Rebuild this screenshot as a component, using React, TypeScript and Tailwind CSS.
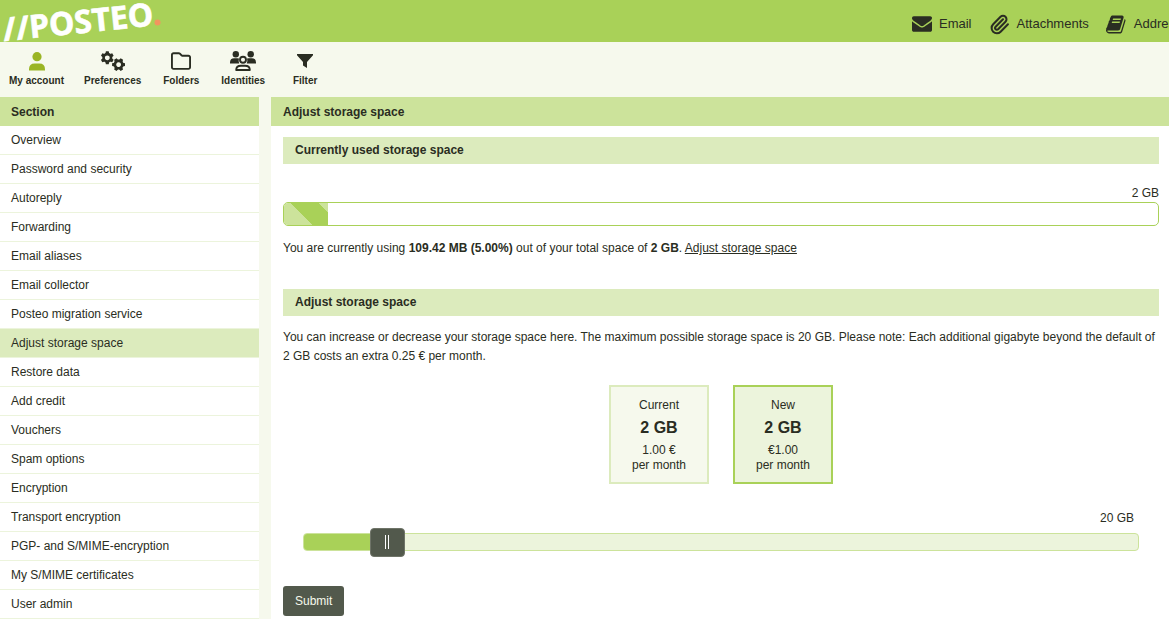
import { useState } from "react";
import type { ReactNode } from "react";
import { Paperclip } from "lucide-react";
import { FaRegFolder } from "react-icons/fa6";

const sections = [
  "Overview",
  "Password and security",
  "Autoreply",
  "Forwarding",
  "Email aliases",
  "Email collector",
  "Posteo migration service",
  "Adjust storage space",
  "Restore data",
  "Add credit",
  "Vouchers",
  "Spam options",
  "Encryption",
  "Transport encryption",
  "PGP- and S/MIME-encryption",
  "My S/MIME certificates",
  "User admin",
];

function Logo() {
  return (
    <svg width="170" height="42" viewBox="0 0 170 42" role="img" aria-label="Posteo">
      <text
        x="4"
        y="41"
        transform="rotate(-5.9 4 41)"
        fill="#fff"
        stroke="#fff"
        strokeWidth="0.6"
        fontWeight="700"
        fontSize="32"
        fontFamily='"Noto Sans", "Open Sans", sans-serif'
      >
        //POSTEO
      </text>
      <circle cx="157.5" cy="22.5" r="3" fill="#f2955f" />
    </svg>
  );
}

function EnvelopeIcon() {
  return (
    <svg width="20" height="20" viewBox="0 64 1792 1792" fill="currentColor" aria-hidden="true">
      <path d="M1792 710v794q0 66-47 113t-113 47h-1472q-66 0-113-47t-47-113v-794q44 49 101 87 362 246 497 345 57 42 92.5 65.5t94.5 48 110 24.5h2q51 0 110-24.5t94.5-48 92.5-65.5q170-123 498-345 57-39 100-87zm0-294q0 79-49 151t-122 123q-376 261-468 325-10 7-42.5 31t-54 38.5-52 32.5-57.5 27-50 9h-2q-23 0-50-9t-57.5-27-52-32.5-54-38.5-42.5-31q-91-64-262-182.5t-205-142.5q-62-42-117-115.5t-55-136.5q0-78 41.5-130t118.5-52h1472q65 0 112.5 47t47.5 113z" />
    </svg>
  );
}

function BookIcon() {
  return (
    <svg width="21" height="21" viewBox="0 0 1792 1792" fill="currentColor" aria-hidden="true">
      <path d="M1639 478q40 57 18 129l-275 906q-19 64-76.5 107.5t-122.5 43.5h-923q-77 0-148.5-53.5t-99.5-131.5q-24-67-2-127 0-4 3-27t4-37q1-8-3-21.5t-3-19.5q2-11 8-21t16.5-23.5 16.5-23.5q23-38 45-91.5t30-91.5q3-10 .5-30t-.5-28q3-11 17-28t17-23q21-36 42-92t25-90q1-9-2.5-32t.5-28q4-13 22-30.5t22-22.5q19-26 42.5-84.5t27.5-96.5q1-8-3-25.5t-2-26.5q2-8 9-18t18-23 17-21q8-12 16.5-30.5t15-35 16-36 19.5-32 26.5-23.5 36-11.5 47.5 5.5l-1 3q38-9 51-9h761q74 0 114 56t18 130l-274 906q-36 119-71.5 153.5t-128.5 34.5h-869q-27 0-38 15-11 16-1 43 24 70 144 70h923q29 0 56-15.5t35-41.5l300-987q7-22 5-57 38 15 59 43zm-1064 2q-4 13 2 22.5t20 9.5h608q13 0 25.5-9.5t16.5-22.5l21-64q4-13-2-22.5t-20-9.5h-608q-13 0-25.5 9.5t-16.5 22.5zm-83 256q-4 13 2 22.5t20 9.5h608q13 0 25.5-9.5t16.5-22.5l21-64q4-13-2-22.5t-20-9.5h-608q-13 0-25.5 9.5t-16.5 22.5z" />
    </svg>
  );
}

function UserIcon() {
  return (
    <svg width="16" height="19" viewBox="0 0 16 19" fill="currentColor" aria-hidden="true">
      <circle cx="8" cy="4.7" r="4.6" />
      <path d="M0 18.4V17.2Q0 11.4 5.8 11.4H10.2Q16 11.4 16 17.2V18.4Z" />
    </svg>
  );
}

function Gear({ x, y, turn }: { x: number; y: number; turn: number }) {
  return (
    <g transform={`translate(${x} ${y}) rotate(${turn})`}>
      <circle r="3.7" fill="none" stroke="currentColor" strokeWidth="2.6" />
      {[0, 60, 120, 180, 240, 300].map((angle) => (
        <path key={angle} d="M-1.9 -4.2L-1.4 -6.5H1.4L1.9 -4.2Z" fill="currentColor" transform={`rotate(${angle})`} />
      ))}
    </g>
  );
}

function GearsIcon() {
  return (
    <svg width="24" height="20" viewBox="0 0 24 20" aria-hidden="true">
      <Gear x={6.3} y={6.8} turn={0} />
      <Gear x={17.6} y={13.6} turn={30} />
    </svg>
  );
}

function IdentitiesIcon() {
  return (
    <svg width="26" height="20" viewBox="0 0 26 20" fill="currentColor" aria-hidden="true">
      <circle cx="5.8" cy="3.2" r="3.2" />
      <circle cx="20.7" cy="3.2" r="3.2" />
      <path d="M0 12.4V11.5Q0 7.2 4.2 7.2H7.4Q8.5 7.2 9 7.6Q8.2 10 9.2 12.4Z" />
      <path d="M26 12.4V11.5Q26 7.2 21.8 7.2H18.6Q17.5 7.2 17 7.6Q17.8 10 16.8 12.4Z" />
      <circle cx="13" cy="8.8" r="3" fill="none" stroke="currentColor" strokeWidth="1.9" />
      <path
        d="M6.2 19Q6.2 14.8 11 14.8H15Q19.8 14.8 19.8 19Z"
        fill="none"
        stroke="currentColor"
        strokeWidth="1.9"
        strokeLinejoin="round"
      />
    </svg>
  );
}

function FilterIcon() {
  return (
    <svg width="16" height="14" viewBox="0 0 16 14" fill="currentColor" aria-hidden="true">
      <path d="M0 0H16V1.2L10 8V14L6 11.4V8L0 1.2Z" />
    </svg>
  );
}

function HeaderLink({ icon, label }: { icon: ReactNode; label: string }) {
  return (
    <a href="#" className="flex shrink-0 items-center gap-[7px] text-[13px]">
      {icon}
      {label}
    </a>
  );
}

function ToolLink({ icon, label, active }: { icon: ReactNode; label: string; active?: boolean }) {
  return (
    <a href="#" className="flex min-w-15 flex-col items-center px-[10px] text-[10px] font-bold">
      <span className={active ? "flex h-6 items-center text-[#9ab524]" : "flex h-6 items-center"}>{icon}</span>
      <span className="leading-[15px]">{label}</span>
    </a>
  );
}

function SubHeading({ children }: { children: ReactNode }) {
  return <h2 className="bg-[#dcebbd] px-3 text-xs leading-[27px] font-bold">{children}</h2>;
}

export default function App() {
  const [size, setSize] = useState(2);
  const price = (1 + Math.max(0, size - 2) * 0.25).toFixed(2);

  return (
    <div className="flex min-h-screen flex-col overflow-x-hidden bg-[#f6f9ed] font-['Liberation_Sans',Arial,sans-serif] text-xs text-[#2a2d22]">
      <header className="flex h-[42px] justify-between bg-[#a9d158]">
        <a href="#" className="shrink-0">
          <Logo />
        </a>
        <nav className="flex w-[257px] shrink-0 gap-[17px] overflow-hidden pt-[6px] whitespace-nowrap">
          <HeaderLink icon={<EnvelopeIcon />} label="Email" />
          <HeaderLink icon={<Paperclip size={21} strokeWidth={2.3} />} label="Attachments" />
          <HeaderLink icon={<BookIcon />} label="Address book" />
        </nav>
      </header>

      <nav className="-ml-px flex h-[55px] pt-[7px]">
        <ToolLink icon={<UserIcon />} label="My account" active />
        <ToolLink icon={<GearsIcon />} label="Preferences" />
        <ToolLink icon={<FaRegFolder size={20} />} label="Folders" />
        <ToolLink icon={<IdentitiesIcon />} label="Identities" />
        <ToolLink icon={<FilterIcon />} label="Filter" />
      </nav>

      <div className="flex grow gap-3">
        <aside className="w-[259px] shrink-0 bg-white">
          <h2 className="bg-[#cce39b] px-[11px] pt-px leading-7 font-bold">Section</h2>
          <ul>
            {sections.map((name) => (
              <li key={name} className="border-b border-[#ecf4dc]">
                <a
                  href="#"
                  className={
                    name === "Adjust storage space"
                      ? "block bg-[#dcebbd] px-[11px] leading-7"
                      : "block px-[11px] leading-7"
                  }
                >
                  {name}
                </a>
              </li>
            ))}
          </ul>
        </aside>

        <main className="min-w-0 grow bg-white">
          <h1 className="bg-[#cce39b] px-3 pt-px leading-7 font-bold">Adjust storage space</h1>
          <div className="pt-[11px] pr-[10px] pl-3">
            <SubHeading>Currently used storage space</SubHeading>
            <div className="mt-5 text-right leading-[18px]">2 GB</div>
            <div className="h-6 overflow-hidden rounded-[5px] border border-[#a9d158]">
              <div className="h-full w-[5%] bg-[repeating-linear-gradient(45deg,#cce39b_0px,#cce39b_20px,#a9d158_20px,#a9d158_40px)]" />
            </div>
            <p className="mt-[13px] leading-[19px]">
              You are currently using <b>109.42 MB (5.00%)</b> out of your total space of <b>2 GB</b>.{" "}
              <a href="#adjust" className="underline">
                Adjust storage space
              </a>
            </p>

            <form id="adjust" className="mt-[31px]" onSubmit={(e) => e.preventDefault()}>
              <SubHeading>Adjust storage space</SubHeading>
              <p className="mt-3 leading-[19px]">
                You can increase or decrease your storage space here. The maximum possible storage space is 20 GB.
                Please note: Each additional gigabyte beyond the default of 2 GB costs an extra 0.25 € per month.
              </p>

              <div className="mt-[19px] flex justify-center gap-6 text-center leading-[15px]">
                <div className="h-[99px] w-[100px] border-2 border-[#dcebbd] bg-[#f6f9ed] pt-[11px]">
                  <div>Current</div>
                  <div className="my-1 text-base leading-[22px] font-bold">2 GB</div>
                  <div>1.00 €</div>
                  <div>per month</div>
                </div>
                <div className="h-[99px] w-[100px] border-2 border-[#a9d158] bg-[#ecf4dc] pt-[11px]">
                  <div>New</div>
                  <div className="my-1 text-base leading-[22px] font-bold">{size} GB</div>
                  <div>€{price}</div>
                  <div>per month</div>
                </div>
              </div>

              <div className="mt-[25px] pr-[25px] text-right leading-[19px]">20 GB</div>
              <div className="relative mx-5 mt-[5px] h-[18px] rounded border border-[#cce39b] bg-[#ecf4dc]">
                <div className="h-full rounded-l-[3px] bg-[#a9d158]" style={{ width: `${size * 5}%` }} />
                <input
                  type="range"
                  aria-label="Storage space in GB"
                  min={0}
                  max={20}
                  value={size}
                  onChange={(e) => setSize(Number(e.target.value))}
                  className="absolute -inset-x-[18px] -top-[7px] h-[30px] cursor-pointer appearance-none bg-transparent [&::-webkit-slider-thumb]:h-[29px] [&::-webkit-slider-thumb]:w-[35px] [&::-webkit-slider-thumb]:appearance-none [&::-webkit-slider-thumb]:rounded [&::-webkit-slider-thumb]:border [&::-webkit-slider-thumb]:border-[#6f7468] [&::-webkit-slider-thumb]:bg-[#52594c] [&::-webkit-slider-thumb]:bg-[linear-gradient(#fff,#fff),linear-gradient(#fff,#fff)] [&::-webkit-slider-thumb]:[background-position:14px_center,17px_center] [&::-webkit-slider-thumb]:[background-size:1px_14px] [&::-webkit-slider-thumb]:bg-no-repeat"
                />
              </div>

              <button type="submit" className="mt-[35px] mb-[3px] h-[30px] rounded-[3px] bg-[#52594c] px-3 text-[#f6f9ed]">
                Submit
              </button>
            </form>
          </div>
        </main>
      </div>
    </div>
  );
}
